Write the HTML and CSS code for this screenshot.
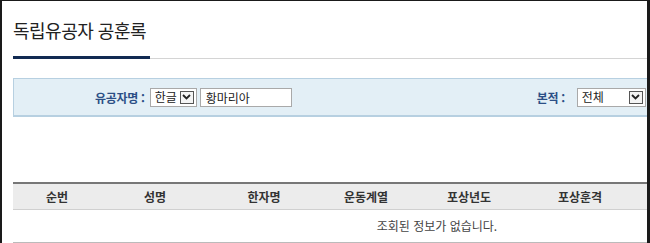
FILE: index.html
```html
<!DOCTYPE html>
<html lang="ko">
<head>
    <meta charset="UTF-8">
    <title>독립유공자 공훈록</title>
    <link rel="stylesheet" href="styles.css">
</head>
<body>
    <div class="frame">
        <div class="content">
            <h1 class="page-title">독립유공자 공훈록</h1>
            <div class="title-line"><span class="title-bar"></span></div>

            <div class="search-box">
                <div class="search-field name-field">
                    <span class="search-label">유공자명 :</span>
                    <div class="fake-select lang-select">
                        <span class="select-text">한글</span>
                        <span class="select-arrow">
                            <svg width="9" height="6" viewBox="0 0 9 6"><path d="M1 1l3.5 3.5L8 1" fill="none" stroke="#222" stroke-width="1.8"/></svg>
                        </span>
                    </div>
                    <input type="text" class="search-input" value="황마리아">
                </div>
                <div class="search-field origin-field">
                    <span class="search-label">본적 :</span>
                    <div class="fake-select origin-select">
                        <span class="select-text">전체</span>
                        <span class="select-arrow">
                            <svg width="9" height="6" viewBox="0 0 9 6"><path d="M1 1l3.5 3.5L8 1" fill="none" stroke="#222" stroke-width="1.8"/></svg>
                        </span>
                    </div>
                </div>
            </div>

            <table class="result-table">
                <thead>
                    <tr>
                        <th class="col-no">순번</th>
                        <th class="col-name">성명</th>
                        <th class="col-hanja">한자명</th>
                        <th class="col-move">운동계열</th>
                        <th class="col-year">포상년도</th>
                        <th class="col-grade">포상훈격</th>
                        <th class="col-rest"></th>
                        <th class="col-rest"></th>
                    </tr>
                </thead>
                <tbody>
                    <tr>
                        <td colspan="8" class="empty-row">조회된 정보가 없습니다.</td>
                    </tr>
                </tbody>
            </table>
        </div>
    </div>
</body>
</html>
```

FILE: styles.css
```css
* {
    margin: 0;
    padding: 0;
    box-sizing: border-box;
}

body {
    background-color: #fff;
    font-family: "Noto Sans CJK KR", "Noto Sans", sans-serif;
    color: #333;
}

.frame {
    width: 650px;
    height: 243px;
    border-top: 1px solid #1a1a1a;
    border-left: 2px solid #1a1a1a;
    border-right: 3px solid #1a1a1a;
    overflow: hidden;
}

.content {
    width: 900px;
    padding-left: 11px;
}

.page-title {
    font-size: 18px;
    font-weight: 400;
    letter-spacing: -0.5px;
    color: #222;
    line-height: 24px;
    padding-top: 17px;
    height: 55px;
}

.title-line {
    height: 3px;
    border-bottom: 1px solid #d4d4d4;
    margin-bottom: 19px;
}

.title-bar {
    display: block;
    width: 137px;
    height: 3px;
    background-color: #112a52;
}

.search-box {
    display: flex;
    align-items: center;
    height: 39px;
    background-color: #e3eff6;
    border: 1px solid #b7d0e1;
    border-bottom-width: 2px;
    margin-bottom: 65px;
}

.search-field {
    display: flex;
    align-items: center;
}

.name-field {
    margin-left: 81px;
}

.origin-field {
    margin-left: 245px;
}

.search-label {
    font-size: 12px;
    font-weight: 700;
    color: #2c4f86;
    letter-spacing: -0.3px;
    margin-right: 5px;
}

.origin-field .search-label {
    margin-right: 12px;
}

.fake-select {
    display: flex;
    align-items: center;
    justify-content: space-between;
    height: 19px;
    background-color: #fff;
    border: 1px solid #a9a9a9;
    padding: 0 2px 0 4px;
}

.lang-select {
    width: 47px;
}

.origin-select {
    width: 69px;
}

.select-text {
    font-size: 12px;
    color: #222;
    line-height: 1;
}

.select-arrow {
    display: flex;
    align-items: center;
    justify-content: center;
    width: 14px;
    height: 13px;
    border: 1px solid #555;
    background-color: #f4f4f4;
}

.search-input {
    width: 92px;
    height: 19px;
    margin-left: 3px;
    border: 1px solid #a9a9a9;
    padding: 0 5px;
    font-family: "Noto Sans CJK KR", sans-serif;
    font-size: 12px;
    color: #222;
    outline: none;
}

.result-table {
    width: 848px;
    border-collapse: collapse;
    table-layout: fixed;
    font-size: 12px;
}

.result-table thead th {
    height: 26px;
    background-color: #ececec;
    border-top: 2px solid #777;
    border-bottom: 1px solid #d0d0d0;
    font-weight: 700;
    color: #333;
    text-align: center;
}

.col-no { width: 88px; }
.col-name { width: 108px; }
.col-hanja { width: 110px; }
.col-move { width: 94px; }
.col-year { width: 112px; }
.col-grade { width: 110px; }
.col-rest { width: 113px; }

.empty-row {
    height: 33px;
    text-align: center;
    color: #444;
    border-bottom: 1px solid #bbb;
}
```
